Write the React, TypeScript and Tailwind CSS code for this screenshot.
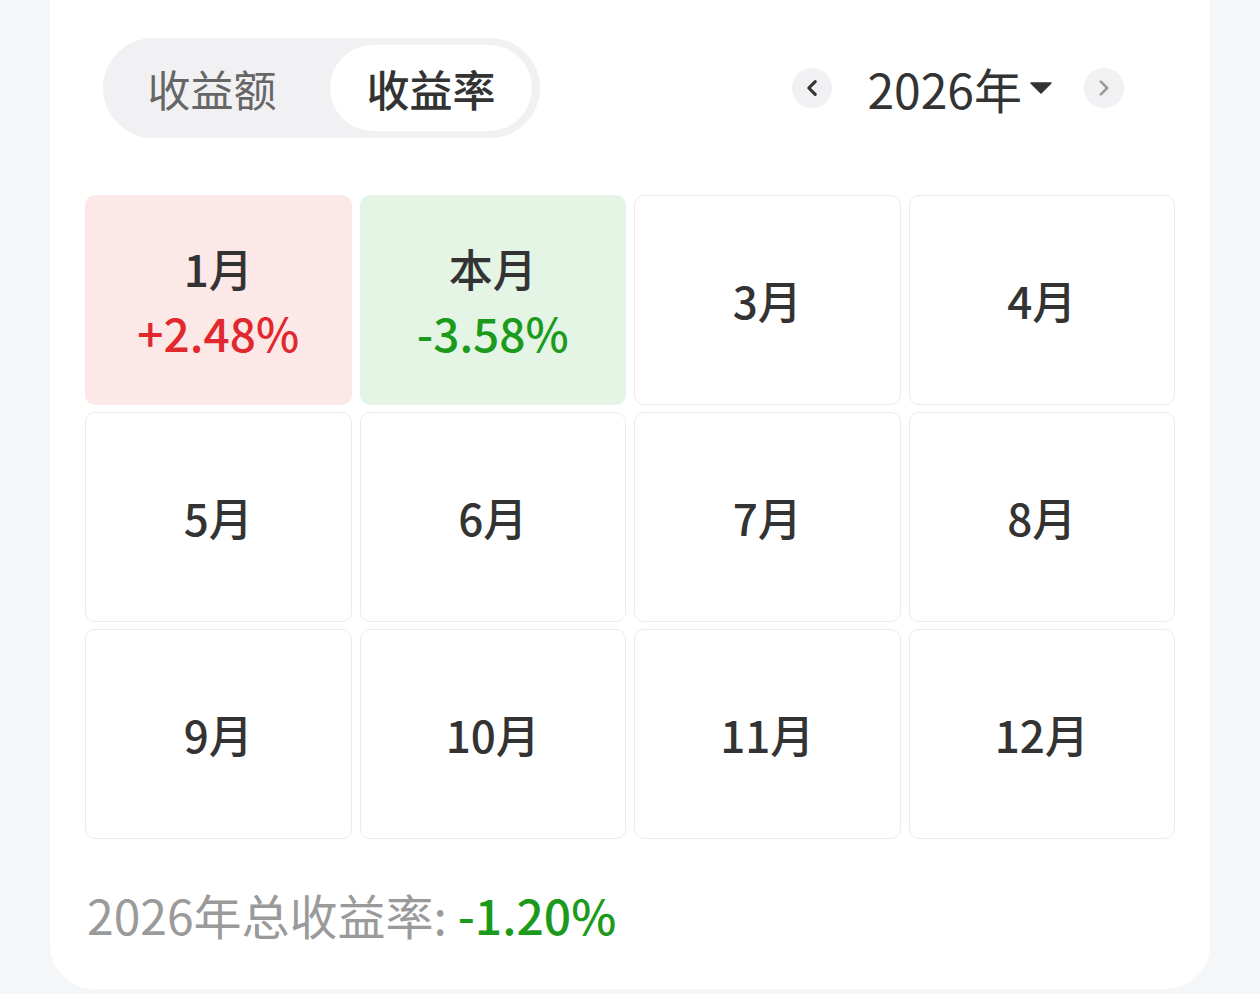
import { useState } from "react";

const font = { fontFamily: '"Noto Sans CJK SC", "Noto Sans", sans-serif' };

type Cell = { label: string; value?: string; tone?: "up" | "down" };

const months: Cell[] = [
    { label: "1月", value: "+2.48%", tone: "up" },
    { label: "本月", value: "-3.58%", tone: "down" },
    { label: "3月" },
    { label: "4月" },
    { label: "5月" },
    { label: "6月" },
    { label: "7月" },
    { label: "8月" },
    { label: "9月" },
    { label: "10月" },
    { label: "11月" },
    { label: "12月" },
];

const App = () => {
    const [mode, setMode] = useState("rate");

    return (
        <div className="min-h-[994px] bg-[#f5f6f8] px-[50px] pb-[6px]" style={font}>
            <div className="bg-white rounded-b-[44px] px-[35px] pt-[38px] pb-[44px]">
                {/* header: toggle + year picker */}
                <div className="flex items-center justify-between pl-[18px] pr-[51px]">
                    <div className="flex items-center h-[100px] w-[437px] rounded-full bg-[#f1f1f3] p-[7px] gap-[16px]">
                        <button
                            onClick={() => setMode("amount")}
                            className={`h-full w-[204px] rounded-full text-[43px] ${mode === "amount" ? "bg-white text-[#333] font-medium" : "text-[#666]"}`}
                        >
                            收益额
                        </button>
                        <button
                            onClick={() => setMode("rate")}
                            className={`h-full w-[202px] rounded-full text-[43px] ${mode === "rate" ? "bg-white text-[#333] font-medium" : "text-[#666]"}`}
                        >
                            收益率
                        </button>
                    </div>

                    <div className="flex items-center">
                        <button className="w-[40px] h-[40px] rounded-full bg-[#f1f1f3] flex items-center justify-center">
                            <svg width="22" height="22" viewBox="0 0 24 24" fill="none" stroke="#333" strokeWidth="3.4" strokeLinecap="round" strokeLinejoin="round">
                                <path d="M15.5 5l-7 7 7 7" />
                            </svg>
                        </button>
                        <div className="flex items-center ml-[35px] mr-[32px]">
                            <span className="text-[48px] leading-none text-[#333]">2026年</span>
                            <svg width="22" height="12" viewBox="0 0 22 12" className="ml-[8px]">
                                <path d="M1 1h20L11 11z" fill="#333" strokeLinejoin="round" stroke="#333" strokeWidth="1.5" />
                            </svg>
                        </div>
                        <button className="w-[40px] h-[40px] rounded-full bg-[#f1f1f3] flex items-center justify-center">
                            <svg width="22" height="22" viewBox="0 0 24 24" fill="none" stroke="#999" strokeWidth="2.8" strokeLinecap="round" strokeLinejoin="round">
                                <path d="M8.5 5l7 7-7 7" />
                            </svg>
                        </button>
                    </div>
                </div>

                {/* month grid */}
                <div className="grid grid-cols-4 gap-x-[8px] gap-y-[7px] mt-[57px]">
                    {months.map((m) => (
                        <div
                            key={m.label}
                            className={`h-[210px] rounded-[10px] flex flex-col items-center justify-center ${
                                m.tone === "up"
                                    ? "bg-[#fde8e8]"
                                    : m.tone === "down"
                                    ? "bg-[#e4f5e6]"
                                    : "bg-white border-[1.5px] border-[#ececec]"
                            }`}
                        >
                            <p className="text-[44px] leading-[64px] text-[#333] font-medium">{m.label}</p>
                            {m.value && (
                                <p
                                    className={`text-[46px] leading-[64px] font-medium ${
                                        m.tone === "up" ? "text-[#e0282e]" : "text-[#1c9a1c]"
                                    }`}
                                >
                                    {m.value}
                                </p>
                            )}
                        </div>
                    ))}
                </div>

                {/* yearly total */}
                <p className="mt-[44px] pl-[2px] text-[48px] leading-[62px] text-[#9a9a9a]">
                    2026年总收益率: <span className="text-[#1c9a1c] font-medium">-1.20%</span>
                </p>
            </div>
        </div>
    );
};

export default App;
